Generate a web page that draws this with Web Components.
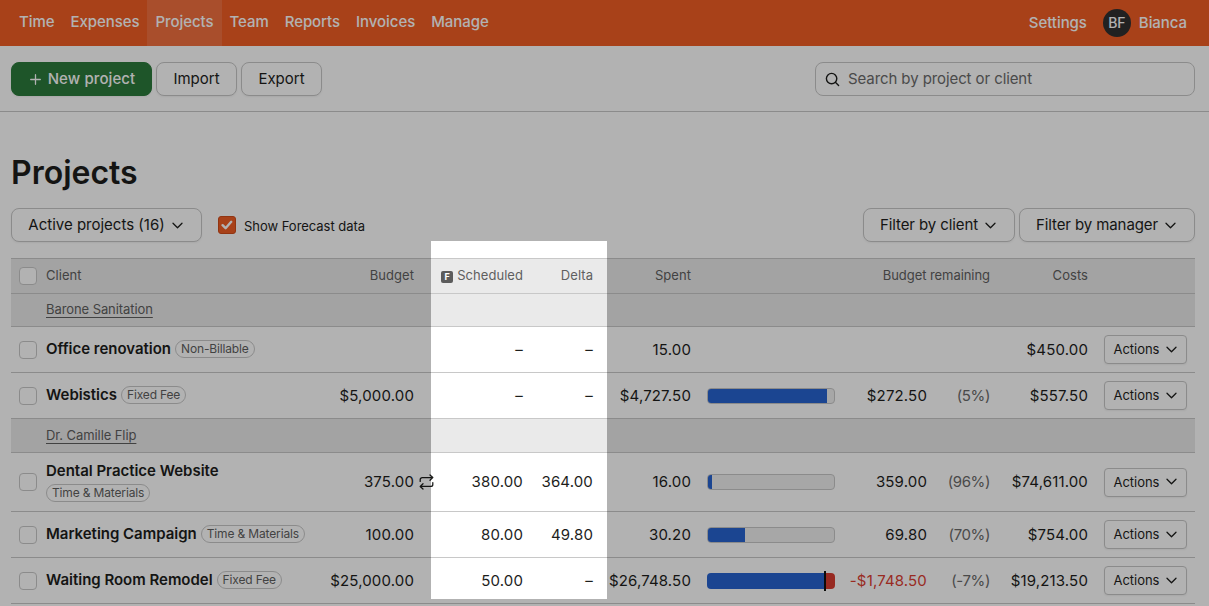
<!DOCTYPE html>
<html lang="en"><head><meta charset="utf-8"><title>Projects</title>
<style>
html,body{margin:0;padding:0;height:606px;overflow:hidden;background:#fff;color:#1d1e1c;font:15px/20px Inter,"Liberation Sans",sans-serif}
</style></head><body>
<app-nav></app-nav>
<app-toolbar></app-toolbar>
<projects-head></projects-head>
<project-table>
  <table-head></table-head>
  <client-row name="Barone Sanitation" h="33"></client-row>
  <project-row name="Office renovation" tag="Non-Billable" sched="–" delta="–" spent="15.00" costs="$450.00"></project-row>
  <project-row name="Webistics" tag="Fixed Fee" budget="$5,000.00" sched="–" delta="–" spent="$4,727.50" fill="95.5" remain="$272.50" pct="(5%)" costs="$557.50"></project-row>
  <client-row name="Dr. Camille Flip" h="34"></client-row>
  <project-row h="59" stack name="Dental Practice Website" tag="Time &amp; Materials" budget="375.00" swap sched="380.00" delta="364.00" spent="16.00" fill="4" remain="359.00" pct="(96%)" costs="$74,611.00"></project-row>
  <project-row name="Marketing Campaign" tag="Time &amp; Materials" budget="100.00" sched="80.00" delta="49.80" spent="30.20" fill="30" remain="69.80" pct="(70%)" costs="$754.00"></project-row>
  <project-row name="Waiting Room Remodel" tag="Fixed Fee" budget="$25,000.00" sched="50.00" delta="–" spent="$26,748.50" fill="100" over remain="-$1,748.50" pct="(-7%)" costs="$19,213.50"></project-row>
</project-table>
<spot-light></spot-light>
<script>
const CHEV='<svg width="11" height="7" viewBox="0 0 11 7" fill="none" stroke="currentColor" stroke-width="1.3" stroke-linecap="round" stroke-linejoin="round"><path d="M1 1.2 5.5 5.7 10 1.2"/></svg>';
const GRID='35px 368px 17px 92px 84px 84px 144px 92px 63px 98px 107px';
const esc=s=>(s||'').replace(/&/g,'&amp;').replace(/</g,'&lt;');
class Base extends HTMLElement{
  html(h){this.attachShadow({mode:'open'}).innerHTML=h;}
}
customElements.define('ui-button',class extends Base{connectedCallback(){if(this.shadowRoot)return;
  this.html(`<style>:host{display:inline-flex;align-items:center;justify-content:center;gap:7px;box-sizing:border-box;height:34px;border:1px solid #c8c8c8;border-radius:8px;background:#fff;color:#1d1e1c;font-size:15px;letter-spacing:0;white-space:nowrap;box-shadow:0 1px 2px rgba(0,0,0,.06)}
  :host([chev]){padding-right:2px}
  :host([primary]){background:#2b7a3b;border-color:#2b7a3b;color:#fff;font-weight:500;gap:7px;letter-spacing:.1px;padding-left:2px}
  :host([small]){height:29px;font-size:13px;border-radius:4px;gap:7px;letter-spacing:-.03px;padding:0 0 1px}
  svg{display:block}</style><slot></slot>${this.hasAttribute('chev')?CHEV:''}`);}});
customElements.define('app-nav',class extends Base{connectedCallback(){
  const links=['Time','Expenses','Projects','Team','Reports','Invoices','Manage'];
  this.html(`<style>:host{display:flex;justify-content:space-between;height:46px;line-height:44px;background:#f15d25;color:#fff;padding:0 22px 0 11px;font-weight:500;letter-spacing:-.06px}
  nav,.r{display:flex;align-items:stretch}a{display:block;padding:0 8px;color:inherit;text-decoration:none}
  a.on{background:rgba(255,255,255,.12)}
  .r{align-items:center}.av{width:28px;height:28px;line-height:28px;border-radius:50%;background:#303030;text-align:center;font-size:14px;margin:0 8px 0 16px}</style>
  <nav>${links.map(l=>`<a href="#" class="${l=='Projects'?'on':''}">${l}</a>`).join('')}</nav>
  <div class="r"><span>Settings</span><span class="av">BF</span><span>Bianca</span></div>`);}});
customElements.define('app-toolbar',class extends Base{connectedCallback(){
  this.html(`<style>:host{display:flex;align-items:center;justify-content:space-between;box-sizing:border-box;height:66px;padding:1px 14px 0 11px;border-bottom:1px solid #c8c8c8}
  .l{display:flex;gap:4px}.s{display:flex;align-items:center;gap:8px;box-sizing:border-box;width:380px;height:34px;padding:0 9px;border:1px solid #c8c8c8;border-radius:8px;color:#6b6b6b;font-size:15px;letter-spacing:-.09px}
  .s svg{display:block;color:#1d1e1c;flex:none}
  .plus{font-weight:400;display:block}</style>
  <div class="l"><ui-button primary style="width:141px"><svg class="plus" width="11" height="11" viewBox="0 0 11 11" stroke="currentColor" stroke-width="1.3" stroke-linecap="round"><path d="M5.5.7v9.6M.7 5.5h9.6"/></svg>New project</ui-button><ui-button style="width:81px">Import</ui-button><ui-button style="width:81px">Export</ui-button></div>
  <div class="s"><svg width="15" height="15" viewBox="0 0 15 15" fill="none" stroke="currentColor" stroke-width="1.4" stroke-linecap="round"><circle cx="6.6" cy="6.6" r="5.2"/><path d="m10.6 10.6 3 3"/></svg><span>Search by project or client</span></div>`);}});
customElements.define('projects-head',class extends Base{connectedCallback(){
  this.html(`<style>:host{display:block;padding:41px 14px 16px 11px}
  h1{margin:0 0 15px;font-size:32px;line-height:40px;font-weight:600;letter-spacing:0}
  .f{display:flex;align-items:center;gap:4px}.cb{display:flex;align-items:center;gap:8px;margin-left:12px;font-size:13px;letter-spacing:-.03px}
  .cb span.x{padding-top:1px}
  .box{width:18px;height:18px;border-radius:3px;background:#f15d25;border:1px solid #d04c1a;box-sizing:border-box;display:flex;align-items:center;justify-content:center}
  .sp{flex:1}</style>
  <h1>Projects</h1><div class="f"><ui-button chev style="width:191px">Active projects (16)</ui-button>
  <label class="cb"><span class="box"><svg width="12" height="10" viewBox="0 0 12 10" fill="none" stroke="#fff" stroke-width="2.4" stroke-linecap="round" stroke-linejoin="round"><path d="m1.6 5.2 3 3 5.6-6.4"/></svg></span><span class="x">Show Forecast data</span></label>
  <span class="sp"></span><ui-button chev style="width:152px;letter-spacing:-.1px">Filter by client</ui-button><ui-button chev style="width:176px;letter-spacing:-.1px">Filter by manager</ui-button></div>`);}});
customElements.define('project-table',class extends Base{connectedCallback(){
  this.html(`<style>:host{display:block;margin:0 14px 0 11px;border-top:1px solid #c8c8c8}</style><slot></slot>`);}});
const ROWCSS=`:host{display:grid;grid-template-columns:${GRID};align-items:center;box-sizing:border-box;border-bottom:1px solid #c8c8c8}
 .n{text-align:right;white-space:nowrap}.chk{display:block;width:18px;height:18px;box-sizing:border-box;margin-left:8px;border:1px solid #c8c8c8;border-radius:4px;background:#fff}`;
customElements.define('table-head',class extends Base{connectedCallback(){
  this.html(`<style>${ROWCSS}:host{height:35px;background:#eaeaea;color:#5f5f5f;font-size:13px;letter-spacing:.05px}
  .l{padding-bottom:2px}
  .f{display:inline-block;text-align:center;vertical-align:0;width:12px;height:12px;border-radius:2px;background:#5c5c5c;color:#fff;font-size:9px;line-height:12px;font-weight:700;margin-right:4px;letter-spacing:0}</style>
  <span class="chk"></span><span class="l" style="display:flex;justify-content:space-between"><span>Client</span><span>Budget</span></span><span></span>
  <span class="n l"><span class="f">F</span>Scheduled</span><span class="n l" style="padding-right:14px">Delta</span><span class="n l">Spent</span><span></span>
  <span class="n l" style="grid-column:span 2;letter-spacing:-.06px">Budget remaining</span><span class="n l">Costs</span><span></span>`);}});
customElements.define('client-row',class extends Base{connectedCallback(){
  this.html(`<style>${ROWCSS}:host{height:${this.getAttribute('h')}px;background:#eaeaea;font-size:13px;color:#5f5f5f;padding-bottom:2px}
  a{grid-column:2;color:inherit;text-underline-offset:3px;letter-spacing:-.08px}</style><a href="#" >${esc(this.getAttribute('name'))}</a>`);}});
customElements.define('project-row',class extends Base{connectedCallback(){
  const a=k=>esc(this.getAttribute(k));const has=k=>this.hasAttribute(k);
  const fill=has('fill')?`<span class="bar"><span class="fl" style="width:${a('fill')}%"></span>${has('over')?'<i class="ov"></i><i class="mk"></i>':''}</span>`:'';
  const swap=has('swap')?`<svg class="swap" width="15" height="16" viewBox="0 0 15 16" fill="none" stroke="currentColor" stroke-width="1.3" stroke-linecap="round" stroke-linejoin="round"><path d="M1.2 7.4V5.6a2 2 0 0 1 2-2h10.6M11 1l2.8 2.6L11 6.2M13.8 8.6v1.8a2 2 0 0 1-2 2H1.2M4 9.8l-2.8 2.6L4 15"/></svg>`:'';
  this.html(`<style>${ROWCSS}:host{height:${this.getAttribute('h')||46}px;font-size:15px;letter-spacing:.15px}
  .name{display:flex;justify-content:space-between;align-items:center;min-width:0}
  .t{display:flex;align-items:center;gap:4px;white-space:nowrap;padding-bottom:2px}.t.stack{flex-direction:column;align-items:flex-start;gap:3px}
  b{font-weight:600;letter-spacing:-.02px}
  .tag{box-sizing:border-box;height:18px;line-height:16px;padding:0 5px;border:1px solid #c8c8c8;border-radius:9px;font-size:12px;color:#5f5f5f;letter-spacing:-.15px}
  .sw{position:relative;overflow:visible;height:16px}.swap{position:absolute;left:5px;top:0;color:#1d1e1c}
  .barc{padding-left:16px}.bar{position:relative;display:block;height:16px;box-sizing:border-box;border:1px solid #c8c8c8;border-radius:4px;background:#f0f0f0;overflow:hidden}
  .fl{display:block;height:16px;margin:-1px 0 0 -1px;background:#2763d0}.ov{position:absolute;right:-1px;top:-1px;bottom:-1px;width:9px;background:#d93c30}
  .mk{position:absolute;right:8px;top:-3px;bottom:-3px;width:2px;background:#111}
  .bar:has(.mk){overflow:visible;border-color:transparent;background:none}.bar:has(.mk) .fl{border-radius:4px 0 0 4px;width:calc(100% - 7px)!important}.bar:has(.mk) .ov{border-radius:0 4px 4px 0}
  .neg{color:#dc3e32}.g{color:#6b6b6b;letter-spacing:-.4px}.act{padding-left:16px;height:29px}.act ui-button{vertical-align:top}</style>
  <span class="chk"></span><span class="name"><span class="t ${has('stack')?'stack':''}"><b>${a('name')}</b><span class="tag">${a('tag')}</span></span><span class="n">${a('budget')}</span></span>
  <span class="sw">${swap}</span><span class="n">${a('sched')}</span><span class="n" style="padding-right:14px">${a('delta')}</span><span class="n">${a('spent')}</span>
  <span class="barc">${fill}</span><span class="n ${has('over')?'neg':''}">${a('remain')}</span><span class="n g">${a('pct')}</span><span class="n">${a('costs')}</span>
  <span class="act"><ui-button small chev style="width:83px">Actions</ui-button></span>`);}});
customElements.define('spot-light',class extends Base{connectedCallback(){
  this.html(`<style>:host{position:fixed;left:0;top:0;width:1209px;height:606px;background:rgba(0,0,0,.3);backdrop-filter:blur(.7px);pointer-events:none;
  clip-path:path(evenodd,"M0 0H1209V606H0ZM431 241V599H607V241Z")}</style>`);}});
</script>
</body></html>
